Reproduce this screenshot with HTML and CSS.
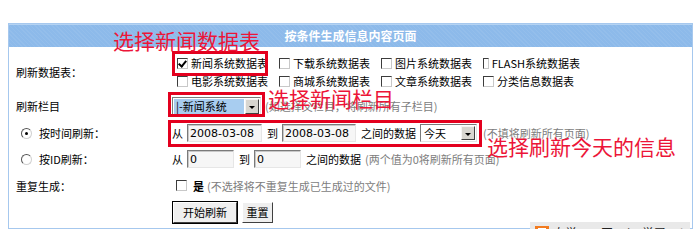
FILE: index.html
```html
<!DOCTYPE html>
<html lang="zh-CN">
  <head>
    <meta charset="UTF-8" />
    <title>按条件生成信息内容页面</title>
    <link rel="stylesheet" href="styles.css">
  </head>

  <body>
    <div class="panel">
      <div class="panel-head">按条件生成信息内容页面</div>
      <div class="form">
        <div class="row row-tables">
          <div class="label">刷新数据表：</div>
          <div class="field table-list">
            <label class="opt"><input type="checkbox" checked>新闻系统数据表</label>
            <label class="opt"><input type="checkbox">下载系统数据表</label>
            <label class="opt"><input type="checkbox">图片系统数据表</label>
            <label class="opt"><input type="checkbox">FLASH系统数据表</label>
            <label class="opt"><input type="checkbox">电影系统数据表</label>
            <label class="opt"><input type="checkbox">商城系统数据表</label>
            <label class="opt"><input type="checkbox">文章系统数据表</label>
            <label class="opt"><input type="checkbox">分类信息数据表</label>
          </div>
        </div>

        <div class="row">
          <div class="label">刷新栏目</div>
          <div class="field">
            <span class="combo combo-class">
              <select class="combo-val picked"><option>|-新闻系统</option></select>
              <span class="combo-btn"></span>
            </span>
            <span class="hint">(如选择父栏目，将刷新所有子栏目)</span>
          </div>
        </div>

        <div class="row">
          <label class="label radio-label"><input type="radio" name="mode" checked>按时间刷新：</label>
          <div class="field">
            <span class="word">从</span>
            <input type="text" class="text date" value="2008-03-08">
            <span class="word">到</span>
            <input type="text" class="text date date-end" value="2008-03-08">
            <span class="word">之间的数据</span>
            <span class="combo combo-day">
              <select class="combo-val"><option>今天</option></select>
              <span class="combo-btn"></span>
            </span>
            <span class="hint">(不填将刷新所有页面)</span>
          </div>
        </div>

        <div class="row">
          <label class="label radio-label"><input type="radio" name="mode">按ID刷新：</label>
          <div class="field">
            <span class="word">从</span>
            <input type="text" class="text num" value="0">
            <span class="word">到</span>
            <input type="text" class="text num" value="0">
            <span class="word">之间的数据</span>
            <span class="hint">(两个值为0将刷新所有页面)</span>
          </div>
        </div>

        <div class="row">
          <div class="label">重复生成：</div>
          <div class="field">
            <label class="opt opt-single"><input type="checkbox"><span class="strong">是</span></label>
            <span class="hint">(不选择将不重复生成已生成过的文件)</span>
          </div>
        </div>

        <div class="row">
          <div class="label"></div>
          <div class="field buttons">
            <button class="btn btn-default">开始刷新</button>
            <button class="btn btn-reset">重置</button>
          </div>
        </div>
      </div>

      <!-- 标注 -->
      <span class="callout-box box-tables"></span>
      <span class="callout-box box-class"></span>
      <span class="callout-box box-time"></span>
      <span class="callout callout-tables">选择新闻数据表</span>
      <span class="callout callout-class">选择新闻栏目</span>
      <span class="callout callout-time">选择刷新今天的信息</span>

      <div class="watermark">
        <svg class="wm-logo" width="14" height="14" viewBox="0 0 14 14">
          <rect width="14" height="14" fill="#f27b1f" />
          <rect x="3" y="2" width="8" height="7" fill="#fff" />
          <rect x="6" y="4" width="3" height="3" fill="#f27b1f" />
          <rect x="3" y="9" width="3" height="4" fill="#fff" />
        </svg>
        <span class="wm-text">自学PHP网_php学习_php教</span>
      </div>
    </div>
  </body>
</html>
```

FILE: styles.css
```css
body {
  margin: 0;
  padding: 23px 0 0 8px;
  background: #ffffff;
  font-family: "Noto Sans CJK SC", "Noto Sans", sans-serif;
  font-size: 11px;
  color: #000000;
}

.panel {
  position: relative;
  width: 685px;
  border: 1px solid #a6c8ee;
  box-sizing: border-box;
  background: #ffffff;
}

.panel-head {
  height: 23px;
  line-height: 21px;
  text-align: center;
  color: #ffffff;
  font-size: 12px;
  font-weight: bold;
  background-color: #8dbaea;
  background-image: repeating-linear-gradient(45deg, rgba(255, 255, 255, 0.06) 0 1px, transparent 1px 3px);
  border-top: 1px solid #b4d3f3;
  box-sizing: border-box;
}

.form {
  padding: 0 0 3px 7px;
}

.row {
  display: grid;
  grid-template-columns: 156px 1fr;
  align-items: center;
  height: 26px;
}

.row-tables {
  height: 45px;
  padding-top: 7px;
  padding-bottom: 2px;
  box-sizing: border-box;
}

.row:nth-child(2) {
  height: 28px;
}

.row:nth-child(5) {
  height: 27px;
}

.label {
  display: flex;
  align-items: center;
  line-height: 16px;
}

.radio-label {
  padding-left: 5px;
}

.field {
  display: flex;
  align-items: center;
  line-height: 16px;
  white-space: nowrap;
}

/* 数据表复选框 */
.table-list {
  display: grid;
  grid-template-columns: repeat(4, 102px);
  grid-auto-rows: 18px;
}

.opt {
  display: flex;
  align-items: center;
  padding-left: 5px;
}

.opt-single {
  padding-left: 4px;
  margin-right: 3px;
}

input[type="checkbox"] {
  appearance: none;
  width: 11px;
  height: 11px;
  margin: 0 3px 0 0;
  border: 1px solid;
  border-color: #3c3c3c #c8c8c8 #c8c8c8 #3c3c3c;
  background: #ffffff;
  box-sizing: border-box;
  position: relative;
}

.opt-single input[type="checkbox"] {
  margin-right: 6px;
}

input[type="checkbox"]:checked::after {
  content: "";
  position: absolute;
  left: 2px;
  top: 0px;
  width: 3px;
  height: 6px;
  border: solid #000000;
  border-width: 0 2px 2px 0;
  transform: rotate(40deg);
}

input[type="radio"] {
  appearance: none;
  width: 11px;
  height: 11px;
  margin: 0 7px 0 0;
  border: 1px solid;
  border-color: #555555 #d0d0d0 #d0d0d0 #555555;
  border-radius: 50%;
  background: #ffffff;
  box-sizing: border-box;
  position: relative;
}

input[type="radio"]:checked::after {
  content: "";
  position: absolute;
  left: 3px;
  top: 3px;
  width: 3px;
  height: 3px;
  border-radius: 50%;
  background: #000000;
}

.hint {
  color: #7d7d7d;
}

.strong {
  font-weight: bold;
}

.word {
  margin-right: 4px;
}

/* 下拉框 */
.combo {
  display: inline-flex;
  align-items: stretch;
  height: 19px;
  border: 1px solid;
  border-color: #7a7a7a #e4e4e4 #e4e4e4 #7a7a7a;
  background: #ffffff;
  box-sizing: border-box;
  padding: 1px;
}

.combo-class {
  width: 89px;
  margin-right: 4px;
}

.combo-day {
  width: 57px;
  height: 18px;
  margin-right: 6px;
}

.combo-val {
  appearance: none;
  flex: 1;
  min-width: 0;
  border: 0;
  padding: 0 2px;
  margin: 0;
  font: inherit;
  line-height: 15px;
  color: #000000;
  background: transparent;
  outline: none;
}

.combo-val.picked {
  background: #a8cdf0;
  margin-right: 1px;
}

.combo-btn {
  position: relative;
  width: 14px;
  background: #d8d6d0;
  border: 1px solid;
  border-color: #f4f4f4 #404040 #404040 #f4f4f4;
  box-sizing: border-box;
}

.combo-btn::after {
  content: "";
  position: absolute;
  left: 3px;
  top: 6px;
  border-left: 3px solid transparent;
  border-right: 3px solid transparent;
  border-top: 3px solid #000000;
}

/* 文本框 */
.text {
  height: 18px;
  margin: 0 5px 0 0;
  padding: 0 2px;
  border: 1px solid;
  border-color: #7a7a7a #e6e6e6 #e6e6e6 #7a7a7a;
  box-shadow: inset 1px 1px 0 #c8c8c8;
  background: #f6f6f6;
  box-sizing: border-box;
  font-family: "DejaVu Sans", sans-serif;
  font-size: 11px;
  color: #000000;
}

.date {
  width: 75px;
}

.date-end {
  width: 74px;
}

.num {
  width: 47px;
}

/* 按钮 */
.buttons {
  gap: 5px;
}

.btn {
  height: 21px;
  padding: 0;
  border: 1px solid;
  border-color: #ffffff #404040 #404040 #ffffff;
  background: #efefef;
  font: inherit;
  color: #000000;
  cursor: pointer;
}

.btn-default {
  width: 64px;
  outline: 1px solid #000000;
  outline-offset: 0;
  margin-left: 1px;
}

.btn-reset {
  width: 31px;
}

/* 红色标注 */
.callout-box {
  position: absolute;
  border: 3px solid #e3001e;
  box-sizing: border-box;
}

.box-tables {
  left: 163px;
  top: 27px;
  width: 96px;
  height: 25px;
}

.box-class {
  left: 159px;
  top: 68px;
  width: 97px;
  height: 25px;
}

.box-time {
  left: 159px;
  top: 96px;
  width: 314px;
  height: 27px;
}

.callout {
  position: absolute;
  font-size: 21px;
  line-height: 21px;
  color: #ec1538;
  white-space: nowrap;
}

.callout-tables {
  left: 104px;
  top: 6px;
}

.callout-class {
  left: 259px;
  top: 64px;
}

.callout-time {
  left: 478px;
  top: 112px;
}

/* 水印 */
.watermark {
  position: absolute;
  left: 521px;
  top: 198px;
  z-index: 2;
  width: 160px;
  height: 21px;
  display: flex;
  align-items: center;
  padding-left: 5px;
  box-sizing: border-box;
  background: #e9e9e9;
  overflow: hidden;
}

.watermark::after {
  content: "";
  position: absolute;
  right: 0;
  top: 0;
  width: 18px;
  height: 100%;
  background: linear-gradient(to right, rgba(233, 233, 233, 0), #e9e9e9);
}

.wm-logo {
  flex-shrink: 0;
  margin-right: 4px;
}

.wm-text {
  font-size: 12px;
  line-height: 16px;
  color: #222222;
  white-space: nowrap;
}
```
